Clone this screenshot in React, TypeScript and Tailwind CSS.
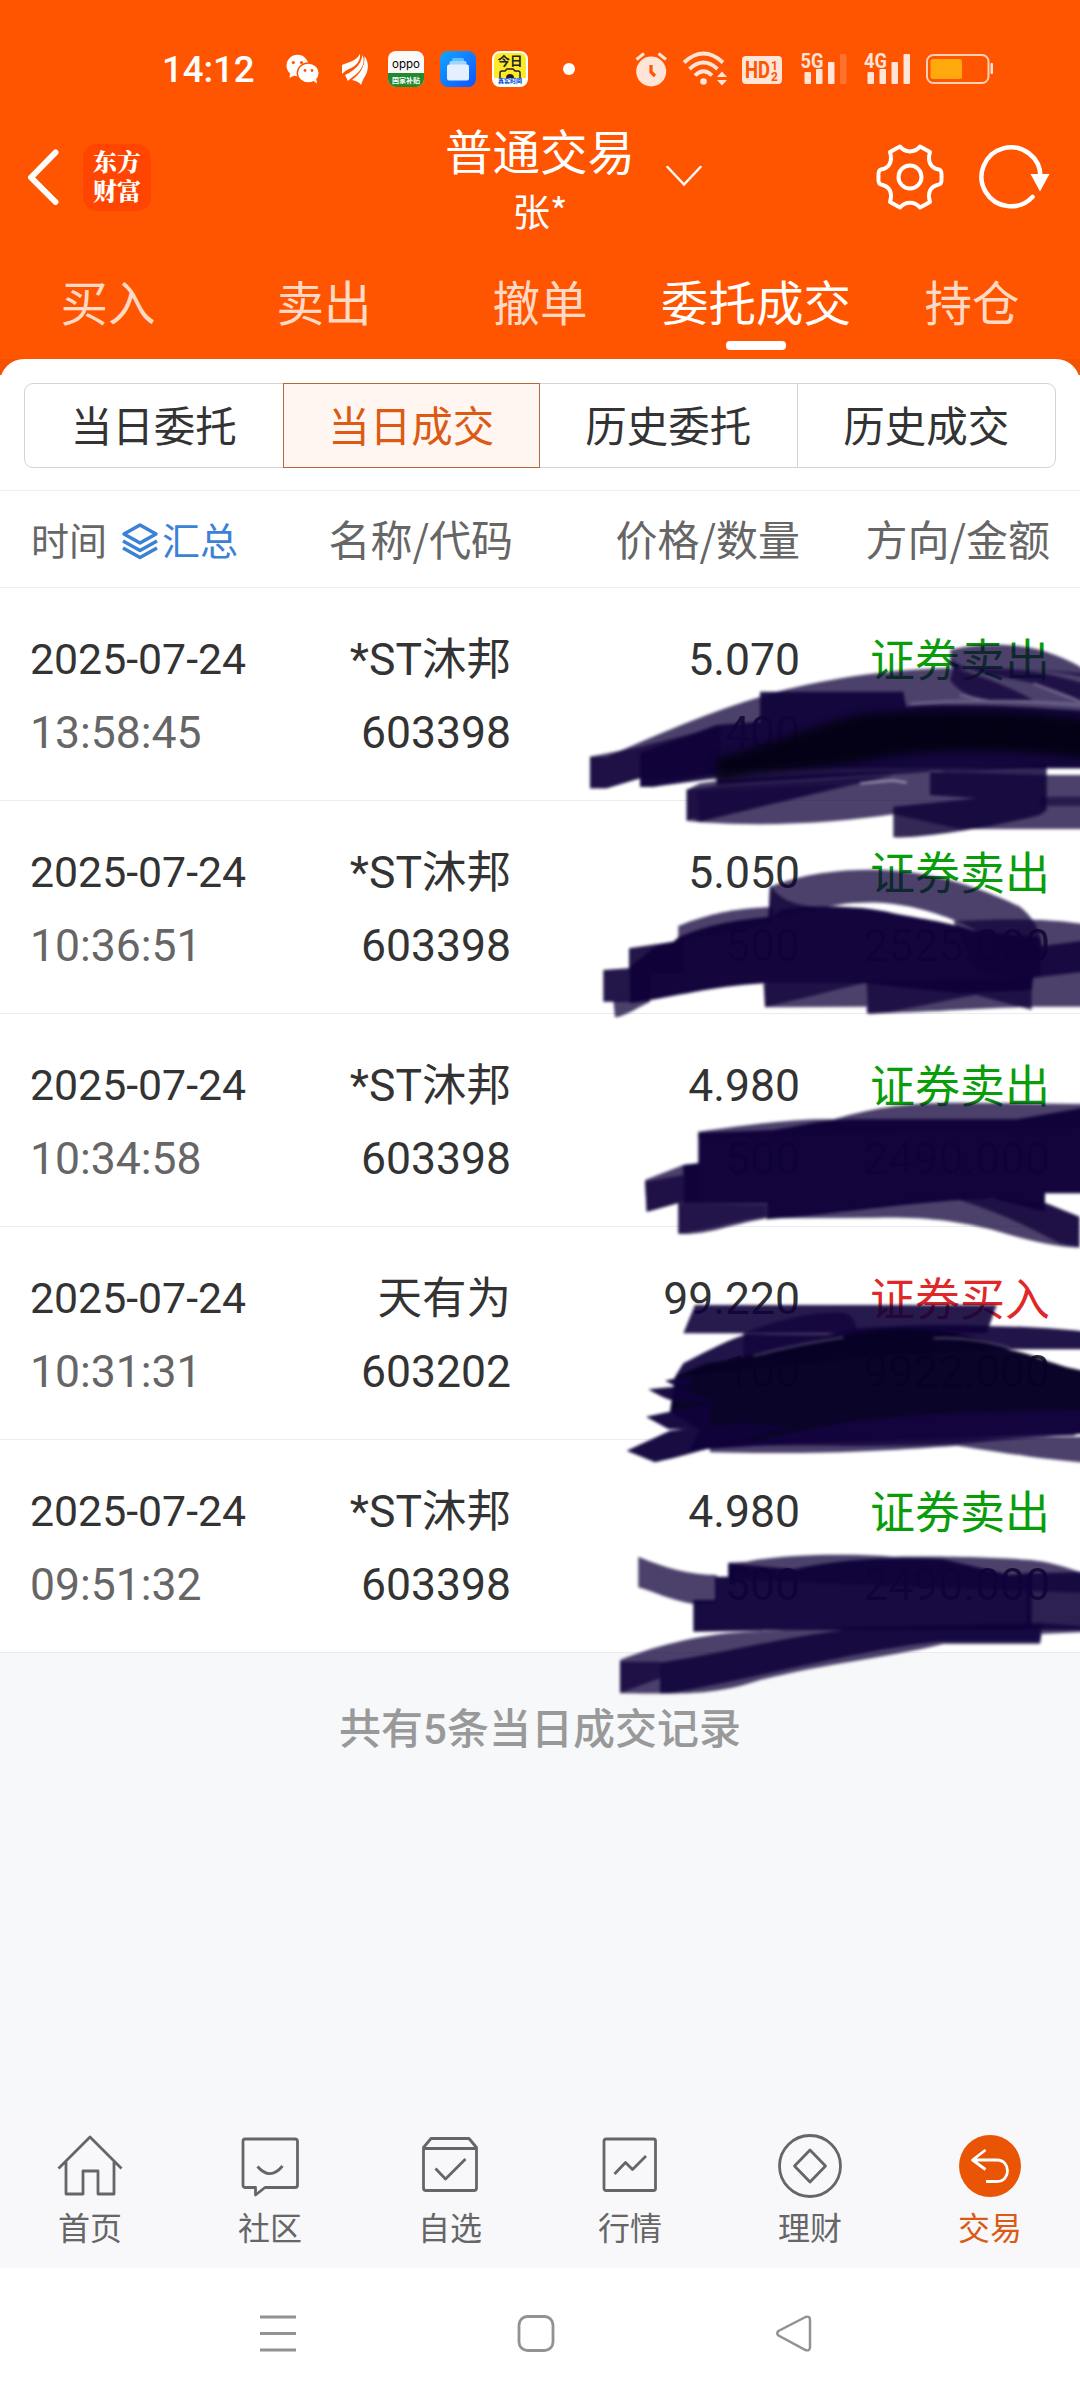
import React from "react";

const ORDERS = [
  { date: "2025-07-24", time: "13:58:45", name: "*ST沐邦", code: "603398", price: "5.070", qty: "400", side: "证券卖出", amount: "2028.000", buy: false },
  { date: "2025-07-24", time: "10:36:51", name: "*ST沐邦", code: "603398", price: "5.050", qty: "500", side: "证券卖出", amount: "2525.000", buy: false },
  { date: "2025-07-24", time: "10:34:58", name: "*ST沐邦", code: "603398", price: "4.980", qty: "500", side: "证券卖出", amount: "2490.000", buy: false },
  { date: "2025-07-24", time: "10:31:31", name: "天有为", code: "603202", price: "99.220", qty: "100", side: "证券买入", amount: "9922.000", buy: true },
  { date: "2025-07-24", time: "09:51:32", name: "*ST沐邦", code: "603398", price: "4.980", qty: "500", side: "证券卖出", amount: "2490.000", buy: false },
];

function WeChat() {
  return (
    <svg className="ml-[32px] h-[30px] w-[33px]" viewBox="0 0 33 30">
      <ellipse cx="11.5" cy="11.5" rx="11" ry="10.7" fill="#fff" />
      <path d="M4 19 3.5 24 9 21Z" fill="#fff" />
      <ellipse cx="22.3" cy="19" rx="11" ry="10" fill="#fff" stroke="#ff5500" strokeWidth="1.4" />
      <path d="M26 26 31 29.5 30 24Z" fill="#fff" />
      <g fill="#ff5500">
        <circle cx="7.3" cy="8.5" r="1.6" /><circle cx="15.5" cy="8.5" r="1.6" />
        <circle cx="19" cy="16.5" r="1.4" /><circle cx="26" cy="16.5" r="1.4" />
      </g>
    </svg>
  );
}

function Wing() {
  return (
    <svg className="ml-[23px] h-[31px] w-[26px]" viewBox="0 0 26 31" fill="#fff">
      <path d="M0 11C6 8 13 8 18 0 19 7 13 13 7 15 4 16 2 18 0 20Z" />
      <path d="M3 21C12 17 19 11 20.500 1 24 9 19 17 12 22 9 24 7 26 6 27Z" />
      <path d="M10 26C18 20 23 13 22.500 2 28 10 26 18 22 24 20 27 20 29 19 31 17 28 14 27 10 26Z" />
    </svg>
  );
}

function StatusBar() {
  return (
    <div className="flex h-[138px] items-center pl-[162px] text-white">
      <span className="w-[92px] pt-[2px] font-[Roboto] text-[36.5px] leading-[40px] font-medium">14:12</span>
      <WeChat />
      <Wing />
      <div className="ml-[20px] flex h-[36px] w-[36px] flex-col overflow-hidden rounded-[8px] bg-[#fafafa] text-center">
        <span className="h-[22px] font-[Inter] text-[11.5px] leading-[27px] text-black">oppo</span>
        <span className="h-[14px] bg-[#23892f] font-['Noto_Sans_CJK_SC'] text-[7px] leading-[14px] font-bold">国家补贴</span>
      </div>
      <svg className="ml-[16px] h-[36px] w-[36px]" viewBox="0 0 36 36">
        <defs>
          <linearGradient id="cards" x1="0" y1="0" x2="1" y2="1"><stop stopColor="#12a6ff" /><stop offset="1" stopColor="#1152ff" /></linearGradient>
        </defs>
        <rect width="36" height="36" rx="8" fill="url(#cards)" />
        <rect x="12" y="7" width="12" height="5" rx="1.5" fill="#63bdff" />
        <rect x="9.5" y="10" width="17" height="6" rx="1.5" fill="#9ed4ff" />
        <rect x="7" y="13.500" width="22" height="16" rx="2" fill="#e4f0ff" />
      </svg>
      <div className="ml-[16px] flex h-[36px] w-[36px] flex-col items-center overflow-hidden rounded-[8px] border-2 border-white bg-[#ffe92c]">
        <span className="h-[15px] font-['Noto_Sans_CJK_SC'] text-[12.5px] leading-[16px] font-bold text-[#222]">今日</span>
        <svg className="h-[10px] w-[22px]" viewBox="0 0 22 10"><path d="M1 10V5Q1 3 3 3H6L8 1H14L16 3H19Q21 3 21 5V10" fill="none" stroke="#222" strokeWidth="1.5" /><path d="M7 10A4 4 0 0 1 15 10Z" fill="#222" /></svg>
        <span className="h-[7px] w-full bg-white text-center font-['Noto_Sans_CJK_SC'] text-[6px] leading-[6px] font-black text-[#1458d8]">真实时间</span>
      </div>
      <i className="ml-[35px] h-[12px] w-[12px] rounded-full bg-white" />
      <svg className="ml-[60px] h-[36px] w-[360px] overflow-visible" viewBox="635 51 360 36" fill="#ffe4d8">
        <circle cx="651.200" cy="71.500" r="15" />
        <path d="M636.500 59.500 644 53.500M658.500 53.500 666 59.500" stroke="#ffe4d8" strokeWidth="3" />
        <path d="M651 65V72L655 76" stroke="#ff5500" strokeWidth="3.200" fill="none" />
        <g fill="none" stroke="#ffe4d8" strokeWidth="3.800">
          <path d="M684 62.500Q703.500 44.500 723 62.500" />
          <path d="M689.500 69Q703.500 56 717.500 69" />
          <path d="M695 75.500Q703.500 67 712 75.500" />
        </g>
        <circle cx="703.500" cy="81.500" r="3.300" />
        <path d="M717 77 722 71.500 727 77ZM717 80 722 85.500 727 80Z" />
        <rect x="742" y="56" width="40" height="28" rx="4" />
        <g fill="#ff5500" fontFamily="Roboto" fontWeight="bold">
          <text x="745" y="77.500" fontSize="23" textLength="25" lengthAdjust="spacingAndGlyphs">HD</text>
          <text x="771" y="69.500" fontSize="12">1</text>
          <text x="771" y="80.500" fontSize="12">2</text>
        </g>
        <g fontFamily="Roboto" fontWeight="bold" fontSize="21">
          <text x="800.500" y="67.500" textLength="23" lengthAdjust="spacingAndGlyphs">5G</text>
          <text x="864" y="67.500" textLength="23" lengthAdjust="spacingAndGlyphs">4G</text>
        </g>
        <g>
          <rect x="804.500" y="72" width="6.500" height="12" rx="1" /><rect x="816" y="69" width="6.500" height="15" rx="1" />
          <rect x="828" y="62" width="6.500" height="22" rx="1" /><rect x="840" y="54" width="6.500" height="30" rx="1" opacity=".2" />
          <rect x="867.500" y="72" width="6.500" height="12" rx="1" /><rect x="879.500" y="69" width="6.500" height="15" rx="1" />
          <rect x="891.500" y="62" width="6.500" height="22" rx="1" /><rect x="903.500" y="54" width="6.500" height="30" rx="1" />
        </g>
        <rect x="927" y="55" width="61.500" height="28" rx="6.500" fill="none" stroke="#ffd0b5" strokeWidth="2" />
        <rect x="930.500" y="59" width="31.500" height="20" rx="2.500" fill="#ffa90d" />
        <rect x="990.500" y="63" width="2.500" height="11" rx="1" />
      </svg>
    </div>
  );
}

function TitleBar() {
  return (
    <div className="grid h-[102px] grid-cols-[340px_400px_340px] text-white">
      <div className="flex pt-[6px] pl-[26px]">
        <svg className="mt-[5px] h-[56px] w-[34px]" viewBox="0 0 34 56"><path d="M29.500 3.500 5 28.500 29.500 53" fill="none" stroke="#fff" strokeWidth="6" strokeLinecap="round" strokeLinejoin="round" /></svg>
        <div className="ml-[23px] flex h-[67px] w-[68px] flex-col items-center justify-center rounded-[14px] bg-[#ff4500] pb-[5px] font-['Noto_Serif_CJK_SC','Noto_Sans_CJK_SC'] text-[24px] leading-[29px] font-black">
          <span>东方</span>
          <span>财富</span>
        </div>
      </div>
      <div className="relative flex flex-col items-center font-['Noto_Sans_CJK_SC']">
        <div className="mt-[-13px] text-[47.5px] leading-[50px]">普通交易</div>
        <div className="mt-[15px] text-[37.5px] leading-[40px]">张*</div>
        <svg className="absolute top-[27px] left-[326px] h-[22px] w-[36px]" viewBox="0 0 36 22"><path d="M1.500 2 18 19.500 34.500 2" fill="none" stroke="#fff" strokeWidth="2.500" strokeLinecap="round" /></svg>
      </div>
      <div className="flex pt-[4px] pl-[135px]">
        <svg className="h-[70px] w-[70px]" viewBox="-35 -35 70 70" fill="none" stroke="#fff" strokeWidth="4" strokeLinejoin="round">
          <path d="M10-30.500 20-25C17-15 21-9 29-7.500Q32-7 31.500 0 32 7 29 7.500C21 9 17 15 20 25L10 30.500C5 24-5 24-10 30.500L-20 25C-17 15-21 9-29 7.500Q-32 7-31.500 0-32-7-29-7.500C-21-9-17-15-20-25L-10-30.500C-5-24 5-24 10-30.500Z" />
          <circle r="11.500" />
        </svg>
        <svg className="ml-[28px] h-[70px] w-[78px]" viewBox="-38 -35 78 70">
          <path d="M29.500 0A29.500 29.500 0 1 0 21.500 20" fill="none" stroke="#fff" strokeWidth="4.500" strokeLinecap="round" />
          <path d="M19.500-3H38.500L29 14.500Z" fill="#fff" />
        </svg>
      </div>
    </div>
  );
}

function Tabs() {
  const tabs = ["买入", "卖出", "撤单", "委托成交", "持仓"];
  return (
    <div className="grid h-[119px] grid-cols-5 font-['Noto_Sans_CJK_SC'] text-[47.5px] leading-[60px] text-[#ffd9c4]">
      {tabs.map((t) => (
        <div key={t} className="flex flex-col items-center pt-[31px] whitespace-nowrap">
          {t === "委托成交" ? (
            <>
              <span className="text-white">{t}</span>
              <i className="mt-[10px] h-[9px] w-[60px] rounded-[4px] bg-white" />
            </>
          ) : (
            <span>{t}</span>
          )}
        </div>
      ))}
    </div>
  );
}

function Segments() {
  return (
    <div className="h-[131px] rounded-t-[24px] bg-white px-[24px] pt-[24px]">
      <div className="grid h-[85px] grid-cols-4 rounded-[9px] border border-[#d4d4d4] font-['Noto_Sans_CJK_SC'] text-[41.5px] leading-[81px] text-[#333]">
        <div className="text-center">当日委托</div>
        <div className="-my-px border border-[#b5673a] bg-[#fff6f2] text-center text-[#db5a14]">当日成交</div>
        <div className="border-r border-[#d4d4d4] text-center">历史委托</div>
        <div className="text-center">历史成交</div>
      </div>
    </div>
  );
}

function TableHead() {
  return (
    <div className="grid h-[98px] grid-cols-[260px_253px_287px_250px] border-y border-[#efefef] font-['Noto_Sans_CJK_SC'] text-[42px] leading-[94px] text-[#666]">
      <div className="flex items-center pl-[31px] text-[38px]">
        <span>时间</span>
        <svg className="mt-[4px] ml-[14px] h-[38px] w-[38px]" viewBox="0 0 38 38" fill="none" stroke="#3b82d6" strokeWidth="3.500" strokeLinejoin="round">
          <path d="M19 3 35 12 19 21 3 12Z" />
          <path d="M2 19 19 28.500 36 19M2 26 19 35.500 36 26" />
        </svg>
        <span className="ml-[3px] text-[#3b82d6]">汇总</span>
      </div>
      <div className="text-right">名称/代码</div>
      <div className="text-right">价格/数量</div>
      <div className="text-right">方向/金额</div>
    </div>
  );
}

function OrderRow({ o }: { o: (typeof ORDERS)[number] }) {
  return (
    <div className="grid h-[213px] grid-cols-[260px_251px_289px_250px] border-b border-[#ececec] pt-[35px] font-[Roboto,'Noto_Sans_CJK_SC'] text-[44.5px] leading-[73px] text-[#333] last:border-transparent">
      <div className="pl-[30px]">
        <div className="text-[42.8px]">{o.date}</div>
        <div className="pt-px text-[#666]">{o.time}</div>
      </div>
      <div className="text-right">
        <div className="translate-y-px">{o.name}</div>
        <div className="pt-px">{o.code}</div>
      </div>
      <div className="text-right">
        <div className="translate-y-px">{o.price}</div>
        <div className="pt-px">{o.qty}</div>
      </div>
      <div className="text-right whitespace-nowrap">
        <div className={o.buy ? "translate-y-0.5 text-[45px] text-[#e02828]" : "translate-y-0.5 text-[45px] text-[#0a9d0a]"}>{o.side}</div>
        <div className="pt-px">{o.amount}</div>
      </div>
    </div>
  );
}

// Semi-transparent marker strokes covering the quantity and amount values.
function Marker() {
  return (
    <svg className="pointer-events-none absolute top-[12px] left-[560px] h-[1120px] w-[520px]" viewBox="0 0 1560 3360" fill="#10023a" fillOpacity=".75">
      <defs>
        <filter id="soft" x="-5%" y="-10%" width="110%" height="120%" colorInterpolationFilters="sRGB"><feGaussianBlur stdDeviation="5" /></filter>
        <filter id="feather" x="-5%" y="-20%" width="110%" height="140%" colorInterpolationFilters="sRGB"><feGaussianBlur stdDeviation="12" /></filter>
      </defs>
      <g filter="url(#soft)">
        <path d="M90 470H140C300 400 480 320 680 268 860 225 1040 205 1180 205 1350 200 1450 210 1600 260V505H470V520L280 540 240 535 140 565H90Z" />
        <path d="M90 470 240 440 480 380V520L280 560H240V535L140 565H90Z" />
        <path d="M240 460 470 375 600 365V275H1030L1038 320C1200 310 1400 320 1600 335V505H1380L1110 515 470 555V535L280 560H240Z" fillOpacity=".92" />
        <path d="M1170 150C1260 125 1400 130 1470 160 1530 180 1560 200 1600 225V240C1520 210 1400 208 1180 208Z" />
        <path d="M1170 165C1180 200 1250 220 1400 245 1500 270 1540 290 1600 320V225C1480 205 1350 210 1180 205L1170 240C1200 280 1240 295 1290 300L1420 300C1350 260 1270 230 1170 200Z" />
        <path d="M380 570 420 550C600 525 900 515 1110 515L1460 525H1600V687H1200L1000 643C850 665 650 682 420 667L380 662Z" />
        <path d="M380 568 470 558 1000 525C900 550 600 620 420 665L400 655 380 662Z" />
        <path d="M410 575 850 553C750 585 600 620 420 665Z" fillOpacity=".45" />
        <path d="M1110 517 1460 490V630L1440 645C1300 680 1100 715 1000 712V620L1250 595 1110 585Z" fillOpacity=".85" />
        <path d="M1440 590H1600V618H1440Z" fillOpacity=".6" />
        <path d="M1050 312C1200 298 1380 300 1600 318M1200 285 1290 305M1420 250 1600 320" fill="none" stroke="#8e86a8" strokeOpacity=".55" strokeWidth="8" />
        <path d="M900 550 1000 541 1040 548" fill="none" stroke="#cfcada" strokeOpacity=".6" strokeWidth="7" />
      </g>
      <path d="M470 475C650 430 750 380 900 345 1100 325 1350 325 1600 360V480C1300 435 1050 450 900 485 750 510 600 510 470 545Z" fill="#030112" fillOpacity=".92" filter="url(#feather)" />
      <g transform="translate(0 750)" filter="url(#soft)">
        <path d="M630 110C760 60 900 55 1000 62 1150 70 1300 130 1380 170 1430 210 1450 260 1450 330H1350C1300 240 1100 165 960 158 880 155 800 165 760 185L700 180 625 205Z" />
        <path d="M630 105C660 150 700 165 780 172L640 205H625Z" />
        <path d="M355 228C450 190 540 172 640 172V220L355 275Z" />
        <path d="M355 262C450 220 560 205 640 200L660 180C750 165 900 165 1000 190 1100 210 1160 215 1240 242L1440 262V378L1420 380 1415 420 1200 430 920 400H610C450 410 350 440 210 460V350L285 290 340 275Z" fillOpacity=".985" />
        <path d="M1430 290 1600 268V362L1430 378Z" fillOpacity=".85" />
        <path d="M130 360 270 350V455H130Z" fillOpacity=".92" />
        <path d="M207 295 340 275 370 270V370H207Z" fillOpacity=".92" />
        <path d="M1180 213C1350 205 1500 205 1600 228V360L1420 385 1250 370Z" />
        <path d="M610 400 1420 380 1600 358V470H1420C1250 475 1050 490 920 490V470L615 472Z" />
        <path d="M615 400H910C820 420 720 450 615 470Z" />
        <path d="M920 400 1415 385V480L1250 435C1150 450 1000 490 925 492Z" />
        <path d="M160 450 270 455C220 480 190 500 165 502Z" />
      </g>
      <g transform="translate(0 1350)" filter="url(#soft)">
        <path d="M415 245C600 220 720 205 820 208 950 170 1050 158 1200 158L1600 162V230L415 265Z" />
        <path d="M415 248 640 240C760 222 780 208 900 208H1370L1600 168V430H1455V485L1300 445C1100 450 850 490 620 508V460H370V345L415 340Z" fillOpacity=".99" />
        <path d="M255 390 370 345 420 340V445C350 455 310 475 260 485Z" />
        <path d="M255 395 370 375V455L260 485Z" />
        <path d="M355 455H620V505C500 525 450 555 355 552Z" fillOpacity=".8" />
        <path d="M355 460 620 465V500C500 515 450 540 355 550Z" fillOpacity=".6" />
        <path d="M620 505 900 470C1150 430 1350 440 1460 460L1558 500V593C1480 590 1400 570 1300 540 1200 515 1100 500 950 503Z" />
        <path d="M1200 435 1460 462 1558 500V590L1500 580C1400 530 1350 500 1200 450Z" />
      </g>
      <g transform="translate(0 1980)" filter="url(#soft)">
        <path d="M405 135H1310L1280 220H370Z" fillOpacity=".9" />
        <path d="M550 220C650 180 750 155 850 158 890 170 890 200 890 225L650 270 550 290Z" fillOpacity=".7" />
        <path d="M370 310C430 280 480 250 560 222L800 225 890 205C950 200 1150 190 1280 198 1400 200 1500 205 1600 218V268H1350L1000 285 345 350Z" fillOpacity=".93" />
        <path d="M345 350 440 310C550 300 750 235 900 218 1050 190 1250 220 1350 270 1440 285 1490 325 1600 335V520L1200 535 700 550 390 570 420 510 330 455Z" fill="#080126" fillOpacity=".99" />
        <path d="M850 490C1000 465 1200 455 1600 450V500L1540 527C1400 530 1300 545 1190 552 900 565 600 550 480 560Z" fill="#170543" fillOpacity=".8" />
        <path d="M315 362 390 345V385L340 375ZM265 388 345 380 470 425H350C310 415 290 402 265 388ZM258 470 450 430 450 510 325 507ZM200 572 330 512 550 490 700 500C550 530 450 570 285 607Z" fillOpacity=".96" />
        <path d="M450 577C800 585 1000 570 1190 557 1350 580 1450 600 1600 610V530L450 540Z" />
        <path d="M580 288C680 260 760 245 850 232M1120 235C1200 230 1290 245 1350 265" fill="none" stroke="#756c92" strokeOpacity=".5" strokeWidth="7" />
      </g>
      <g transform="translate(0 2640)" filter="url(#soft)">
        <path d="M235 230C320 265 390 285 470 285V370L400 372C330 360 280 335 235 322Z" />
        <path d="M505 248 560 245C650 225 850 218 1000 230 1200 228 1400 235 1450 245 1500 255 1530 265 1600 290V340L505 300Z" />
        <path d="M465 290H505V250L700 268C850 235 1000 230 1150 238L1350 285 1415 278V450H700L400 455V360H465Z" fillOpacity=".965" />
        <path d="M1400 280 1600 275V450H1400Z" fillOpacity=".88" />
        <path d="M180 540C300 490 450 460 560 455L900 440 1445 430 1600 440V455L1445 462 1440 492H1150C1000 530 800 550 600 600 450 650 350 640 180 640Z" />
        <path d="M300 548C500 520 700 460 950 440L1445 430 1440 485H1130C900 510 600 590 330 640H300Z" fillOpacity=".88" />
        <path d="M180 545H300V595L190 635H180Z" />
      </g>
    </svg>
  );
}

const ICONS: Record<string, React.ReactNode> = {
  首页: <path d="M3.500 35.500 35 4 66.500 35.500M11 29V61H28V38H43V61H59V29" />,
  社区: <><path d="M10 6H60Q62.500 6 62.500 8.500V52Q62.500 54.500 60 54.500H30L20.500 62V54.500H10Q8 54.500 8 52V8.500Q8 6 10 6Z" /><path d="M22.500 33.500Q35 48 47.500 33" /></>,
  自选: <><path d="M8.500 14.500 16 5.500H54L61.500 14.500V55Q61.500 57.500 59 57.500H11Q8.500 57.500 8.500 55ZM8.500 15.500H61.500" /><path d="M20.500 35.500 30.500 46 50.500 26" /></>,
  行情: <><rect x="9" y="6" width="51.500" height="51.500" rx="2" /><path d="M19.500 41 30.500 29.500 37.500 36.500 51 23" /></>,
  理财: <><circle cx="35" cy="33" r="30.500" /><path d="M35 17 50.500 33 35 49 19.500 33Z" /></>,
  交易: <><circle cx="35" cy="33" r="31" fill="#e95504" stroke="none" /><path d="M30.500 17 17.500 27 30.500 36.500M18 27H42C56 27 56 48.500 42 48.500H31" stroke="#fff" /></>,
};

function BottomNav() {
  return (
    <div className="grid h-[148px] grid-cols-6 bg-[#f8f8fb] font-['Noto_Sans_CJK_SC'] text-[32px] leading-[40px] text-[#666]">
      {Object.keys(ICONS).map((k) => (
        <div key={k} className={k === "交易" ? "flex flex-col items-center pt-[13px] text-[#d95b14]" : "flex flex-col items-center pt-[13px]"}>
          <svg className="h-[68px] w-[70px]" viewBox="0 0 70 68" fill="none" stroke="#666" strokeWidth="2.800" strokeLinejoin="round">{ICONS[k]}</svg>
          <span className="mt-[5px]">{k}</span>
        </div>
      ))}
    </div>
  );
}

function SystemNav() {
  return (
    <div className="flex h-[132px] items-start bg-white pt-[46px]">
      <svg className="ml-[259px] h-[38px] w-[38px]" viewBox="0 0 38 38"><path d="M1 3H37M1 19.500H37M1 36H37" stroke="#929292" strokeWidth="3.200" /></svg>
      <svg className="ml-[220px] h-[38px] w-[38px]" viewBox="0 0 38 38"><rect x="2" y="2.500" width="34" height="34" rx="8.500" fill="none" stroke="#929292" strokeWidth="2.800" /></svg>
      <svg className="ml-[220px] h-[38px] w-[38px]" viewBox="0 0 38 38"><path d="M30.500 3 3.500 17Q1 19.300 3.500 21.500L30.500 36Q35 37.500 35 33V6Q35 1.500 30.500 3Z" fill="none" stroke="#929292" strokeWidth="2.500" /></svg>
    </div>
  );
}

export default function App() {
  return (
    <div className="flex h-[2400px] w-[1080px] flex-col overflow-hidden bg-[#f7f8fa]">
      <div className="bg-[#ff5500]">
        <StatusBar />
        <TitleBar />
        <Tabs />
      </div>
      <div className="bg-[linear-gradient(#f55200_16px,#fff_16px)]">
        <Segments />
      </div>
      <div className="bg-white">
        <TableHead />
      </div>
      <div className="relative h-[1064px] bg-white">
        {ORDERS.map((o) => <OrderRow key={o.time} o={o} />)}
        <Marker />
      </div>
      <div className="mt-[48px] text-center font-[Roboto,'Noto_Sans_CJK_SC'] text-[42px] leading-[60px] font-medium text-[#999]">共有5条当日成交记录</div>
      <div className="mt-auto">
        <BottomNav />
        <SystemNav />
      </div>
    </div>
  );
}
